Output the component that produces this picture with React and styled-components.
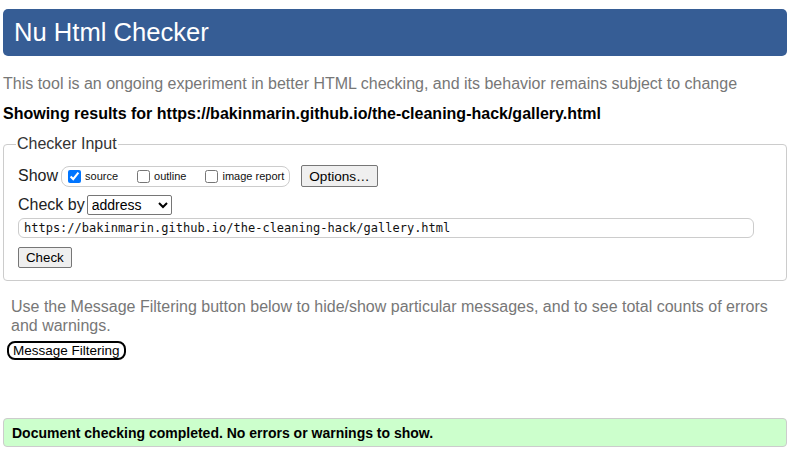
import React from 'react'
import styled, { createGlobalStyle } from 'styled-components'

const Global = createGlobalStyle`
  html, body { margin: 0; padding: 0; background: #fff; }
  body { font-family: "Liberation Sans", Arial, sans-serif; font-size: 16px; color: #000; }
`

const Page = styled.div`
  padding: 9px 11px 0 3px;
  display: flex;
  flex-direction: column;
`
const Header = styled.h1`
  margin: 0;
  height: 47px;
  background: #365d95;
  border-radius: 5px;
  color: #fff;
  font-weight: normal;
  font-size: 25.6px;
  display: flex;
  align-items: center;
  padding-left: 11px;
`
const Intro = styled.p`
  margin: 19px 0 0;
  color: #777;
  font-size: 16px;
  line-height: 18px;
`
const Results = styled.p`
  margin: 12px 0 0;
  font-weight: bold;
  font-size: 16px;
  line-height: 18px;
`
const Fieldset = styled.fieldset`
  margin: 12px 0 0;
  border: 1px solid #ccc;
  border-radius: 4px;
  padding: 0 32px 12px 14px;
  min-width: 0;
`
const Legend = styled.legend`
  color: #333;
  font-size: 16px;
  padding: 0 1px;
  margin-left: -2px;
`
const Row = styled.div`
  display: flex;
  align-items: center;
  margin-top: ${p => p.$top || 0}px;
`
const Label = styled.span`
  font-size: 16px;
  color: #222;
`
const Group = styled.div`
  display: flex;
  align-items: center;
  height: 19px;
  border: 1px solid #ccc;
  border-radius: 8px;
  padding: 0 5px 0 6px;
  margin-left: 3px;
`
const Choice = styled.label`
  display: flex;
  align-items: center;
  font-size: 11px;
  color: #111;
  margin-right: ${p => p.$last ? 0 : 19}px;
`
const Box = styled.input`
  margin: 0 4px 0 0;
  width: 13px;
  height: 13px;
  accent-color: #0075ff;
`
const Button = styled.button`
  font-family: "Liberation Sans", Arial, sans-serif;
  font-size: ${p => p.$fs || 13.3}px;
  background: #efefef;
  border: 1px solid #767676;
  border-radius: 2px;
  padding: 0 7px;
  height: ${p => p.$h || 21}px;
  margin-left: ${p => p.$ml || 0}px;
  color: #000;
`
const Select = styled.select`
  font-family: "Liberation Sans", Arial, sans-serif;
  font-size: 14px;
  width: 85px;
  height: 20px;
  border: 1px solid #767676;
  border-radius: 2px;
  background: #fff;
  margin-left: 2px;
`
const UrlInput = styled.input`
  margin-top: 3px;
  height: 20px;
  box-sizing: border-box;
  width: 100%;
  border: 1px solid #ccc;
  border-radius: 6px;
  padding: 0 5px;
  font-family: "DejaVu Sans Mono", "Liberation Mono", monospace;
  font-size: 12px;
  color: #111;
`
const Filter = styled.p`
  margin: 16px 0 0 8px;
  color: #777;
  font-size: 16px;
  line-height: 19px;
  max-width: 770px;
`
const FilterButton = styled.button`
  align-self: flex-start;
  margin: 6px 0 0 4px;
  font-family: "Liberation Sans", Arial, sans-serif;
  font-size: 13.5px;
  background: #fff;
  border: 2px solid #000;
  border-radius: 8px;
  height: 19px;
  padding: 0 4px;
  line-height: 14px;
  color: #000;
`
const Success = styled.div`
  margin-top: 58px;
  height: 29px;
  box-sizing: border-box;
  background: #ccffcc;
  border: 1px solid #ccc;
  border-radius: 4px;
  display: flex;
  align-items: center;
  padding-left: 8px;
  font-weight: bold;
  font-size: 14px;
`

export default function App() {
  return (
    <Page>
      <Global />
      <Header>Nu Html Checker</Header>
      <Intro>This tool is an ongoing experiment in better HTML checking, and its behavior remains subject to change</Intro>
      <Results>Showing results for https://bakinmarin.github.io/the-cleaning-hack/gallery.html</Results>
      <Fieldset>
        <Legend>Checker Input</Legend>
        <Row $top={12}>
          <Label>Show</Label>
          <Group>
            <Choice><Box type="checkbox" defaultChecked />source</Choice>
            <Choice><Box type="checkbox" />outline</Choice>
            <Choice $last><Box type="checkbox" />image report</Choice>
          </Group>
          <Button $ml={11} $h={22} $fs={13.6}>Options…</Button>
        </Row>
        <Row $top={8}>
          <Label>Check by</Label>
          <Select defaultValue="address">
            <option value="address">address</option>
            <option value="file">file upload</option>
            <option value="text">text input</option>
          </Select>
        </Row>
        <UrlInput defaultValue="https://bakinmarin.github.io/the-cleaning-hack/gallery.html" />
        <Row $top={9}>
          <Button>Check</Button>
        </Row>
      </Fieldset>
      <Filter>Use the Message Filtering button below to hide/show particular messages, and to see total counts of errors and warnings.</Filter>
      <FilterButton>Message Filtering</FilterButton>
      <Success>Document checking completed. No errors or warnings to show.</Success>
    </Page>
  )
}
